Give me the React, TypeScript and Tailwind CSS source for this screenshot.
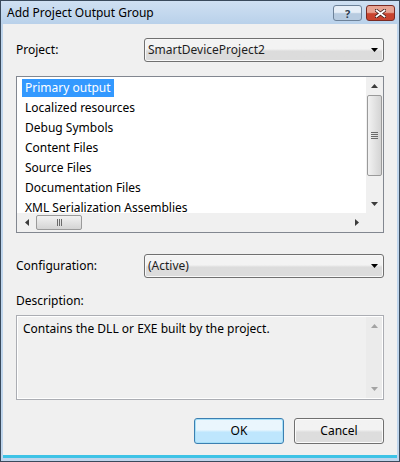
import React from "react";

const items = [
  "Primary output",
  "Localized resources",
  "Debug Symbols",
  "Content Files",
  "Source Files",
  "Documentation Files",
  "XML Serialization Assemblies",
];

function Arrow({ dir, className = "" }: { dir: "up" | "down" | "left" | "right"; className?: string }) {
  const pts = {
    up: "0,4 7,4 3.5,0",
    down: "0,0 7,0 3.5,4",
    left: "4,0 4,7 0,3.5",
    right: "0,0 0,7 4,3.5",
  }[dir];
  const w = dir === "up" || dir === "down" ? 7 : 4;
  const h = dir === "up" || dir === "down" ? 4 : 7;
  return (
    <svg width={w} height={h} viewBox={`0 0 ${w} ${h}`} className={className}>
      <polygon points={pts} fill="currentColor" />
    </svg>
  );
}

function Combo({ value }: { value: string }) {
  return (
    <div className="flex h-[24px] w-[240px] items-center justify-between rounded-[3px] border border-[#707070] bg-gradient-to-b from-[#f3f3f3] from-45% to-[#dcdcdc] to-55% pl-[3px] pr-[5px] shadow-[inset_0_0_0_1px_#f8f8f8]">
      <span className="text-[#1e1e1e]">{value}</span>
      <svg width="7" height="4" viewBox="0 0 7 4">
        <polygon points="0,0 7,0 3.5,4" fill="#000" />
      </svg>
    </div>
  );
}

export default function App() {
  return (
    <div
      className="flex h-[462px] w-[400px] flex-col overflow-hidden border border-[#3a4a5c] bg-[#bfd5ec] text-[12px] text-black"
      style={{ fontFamily: '"Noto Sans", "Open Sans", sans-serif' }}
    >
      {/* title bar */}
      <div className="flex h-[23px] shrink-0 items-start justify-between bg-gradient-to-b from-[#cfe0f2] to-[#b9d1ea] pl-[6px] pr-[4px]">
        <span className="mt-[3px] text-[12px] text-black">Add Project Output Group</span>
        <div className="mt-[4px] flex gap-[4px]">
          <div className="flex h-[16px] w-[29px] items-center justify-center rounded-[3px] border border-[#6d8299] bg-gradient-to-b from-[#e6eef7] from-45% to-[#b7cbe0] to-55% text-[11px] font-bold leading-none text-[#2d3d50]">
            ?
          </div>
          <div className="flex h-[16px] w-[29px] items-center justify-center rounded-[3px] border border-[#7a2a22] bg-gradient-to-b from-[#e8a493] from-45% to-[#c8442f] to-55%">
            <svg width="11" height="9" viewBox="0 0 11 9">
              <path d="M1.5 1.5 L9.5 7.5 M9.5 1.5 L1.5 7.5" stroke="#3b1a16" strokeWidth="3.4" strokeLinecap="square" />
              <path d="M1.5 1.5 L9.5 7.5 M9.5 1.5 L1.5 7.5" stroke="#fff" strokeWidth="1.8" strokeLinecap="square" />
            </svg>
          </div>
        </div>
      </div>

      {/* client area */}
      <div className="ml-[2px] mr-[2px] mb-[3px] flex flex-1 flex-col border-b-[3px] border-b-[#3ec3e6] bg-[#f0f0f0] px-[13px]">
        <div className="mt-[14px] flex h-[24px] items-center justify-between">
          <span>Project:</span>
          <Combo value="SmartDeviceProject2" />
        </div>

        {/* list box */}
        <div className="mt-[14px] flex h-[157px] flex-col border border-[#828790] bg-white">
          <div className="flex h-[136px]">
            <div className="flex-1 overflow-hidden pl-[5px] pt-[2px]">
              {items.map((t, i) => (
                <div key={t} className="flex h-[20px] items-start">
                  <span
                    className={
                      i === 0
                        ? "h-[18px] bg-[#3399ff] px-[3px] leading-[18px] text-white"
                        : "h-[18px] px-[3px] leading-[18px] text-black"
                    }
                  >
                    {t}
                  </span>
                </div>
              ))}
            </div>
            <div className="flex w-[17px] flex-col items-center bg-[#f0f0f0] text-[#3c3c3c]">
              <div className="flex h-[18px] items-center justify-center">
                <Arrow dir="up" />
              </div>
              <div className="mx-[1px] flex h-[81px] w-[15px] flex-col items-center justify-center gap-[1px] rounded-[2px] border border-[#9a9a9a] bg-gradient-to-r from-[#f2f2f2] to-[#d4d4d4]">
                <div className="h-[1px] w-[7px] bg-[#6b6b6b]" />
                <div className="h-[1px] w-[7px] bg-[#6b6b6b]" />
                <div className="h-[1px] w-[7px] bg-[#6b6b6b]" />
                <div className="h-[1px] w-[7px] bg-[#6b6b6b]" />
              </div>
              <div className="flex flex-1 items-end justify-center pb-[7px]">
                <Arrow dir="down" />
              </div>
            </div>
          </div>
          <div className="flex flex-1">
            <div className="flex flex-1 items-center bg-[#f0f0f0] text-[#3c3c3c]">
              <div className="flex w-[19px] justify-center">
                <Arrow dir="left" />
              </div>
              <div className="flex h-[15px] w-[46px] items-center justify-center gap-[1px] rounded-[2px] border border-[#9a9a9a] bg-gradient-to-b from-[#f2f2f2] to-[#d4d4d4]">
                <div className="h-[7px] w-[1px] bg-[#6b6b6b]" />
                <div className="h-[7px] w-[1px] bg-[#6b6b6b]" />
                <div className="h-[7px] w-[1px] bg-[#6b6b6b]" />
              </div>
              <div className="flex-1" />
              <div className="flex w-[19px] justify-center">
                <Arrow dir="right" />
              </div>
            </div>
            <div className="w-[17px] bg-[#f0f0f0]" />
          </div>
        </div>

        <div className="mt-[21px] flex h-[24px] items-center justify-between">
          <span>Configuration:</span>
          <Combo value="(Active)" />
        </div>

        <div className="mt-[14px] h-[20px]">Description:</div>

        {/* description */}
        <div className="mt-[3px] flex h-[85px] border border-[#abadb3] bg-[#f0f0f0] shadow-[inset_0_0_0_1px_#fff]">
          <div className="flex-1 pl-[6px] pt-[4px]">Contains the DLL or EXE built by the project.</div>
          <div className="my-[1px] mr-[1px] flex w-[16px] flex-col items-center justify-between bg-[#ebebeb] py-[7px] text-[#a3a3a3]">
            <Arrow dir="up" />
            <Arrow dir="down" />
          </div>
        </div>

        <div className="mt-[18px] flex justify-end gap-[10px]">
          <button className="h-[26px] w-[90px] rounded-[3px] border border-[#3c7fb1] bg-gradient-to-b from-[#eaf6fd] from-45% to-[#bee6fd] to-55% shadow-[inset_0_0_0_1px_#a6e0f8]">
            OK
          </button>
          <button className="h-[26px] w-[90px] rounded-[3px] border border-[#707070] bg-gradient-to-b from-[#f2f2f2] from-45% to-[#dddddd] to-55% shadow-[inset_0_0_0_1px_#fbfbfb]">
            Cancel
          </button>
        </div>
      </div>
    </div>
  );
}
